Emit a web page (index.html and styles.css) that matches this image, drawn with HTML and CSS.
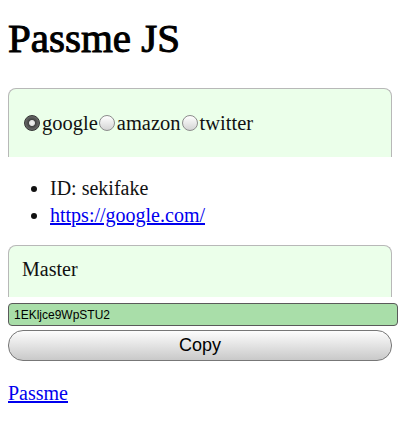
FILE: index.html
```html
<!DOCTYPE html>
<html>
<head>
<meta charset="utf-8">
<link rel="stylesheet" href="styles.css">
</head>
<body>
<div class="page">
  <h1 class="title">Passme JS</h1>
  <div class="panel panel-sites">
    <label class="choice"><input type="radio" name="site" class="radio" checked>google</label><label class="choice"><input type="radio" name="site" class="radio">amazon</label><label class="choice"><input type="radio" name="site" class="radio">twitter</label>
  </div>
  <ul class="info">
    <li>ID: sekifake</li>
    <li><a href="#" class="link">https://google.com/</a></li>
  </ul>
  <div class="panel panel-master">Master</div>
  <input class="result" type="text" value="1EKljce9WpSTU2">
  <button class="copy">Copy</button>
  <p class="footer"><a href="#" class="link">Passme</a></p>
</div>
</body>
</html>
```

FILE: styles.css
```css
html, body {
  margin: 0;
  padding: 0;
  background: #fff;
}
.page {
  padding: 0 8px;
  font-family: "Liberation Serif", serif;
  font-size: 20px;
  color: #111;
}
.title {
  margin: 15px 0 26px;
  font-size: 41px;
  font-weight: normal;
  line-height: 47px;
  color: #000;
  -webkit-text-stroke: 1px #000;
}
.panel {
  background: #ebffea;
  border: 1px solid #b8b8b8;
  border-bottom: none;
  border-radius: 8px 8px 0 0;
  line-height: 23px;
}
.panel-sites {
  box-sizing: border-box;
  height: 69px;
  padding: 0 14px;
  display: flex;
  align-items: center;
  font-size: 20.5px;
}
.choice {
  display: inline-flex;
  align-items: center;
}
.radio {
  appearance: none;
  -webkit-appearance: none;
  width: 16px;
  height: 16px;
  margin: 0 2px 0 1px;
  border-radius: 50%;
  border: 1px solid #8c8c8c;
  box-sizing: border-box;
  background: linear-gradient(#ffffff, #d4d4d4);
}
.radio:checked {
  border-color: #333;
  background: radial-gradient(circle at 50% 50%, #f2f2f2 0, #e0e0e0 2.5px, #444 3.5px, #6a6a6a 7px);
}
.info {
  margin: 18px 0 16px;
  padding-left: 42px;
  line-height: 27px;
}
.link {
  color: #0000ee;
}
.panel-master {
  height: 52px;
  box-sizing: border-box;
  padding: 12px 13px 0;
}
.result {
  display: block;
  box-sizing: border-box;
  width: calc(100% + 6px);
  height: 23px;
  margin: 6px 0 0;
  padding: 0 5px;
  border: 1px solid #5a5a5a;
  border-radius: 4px;
  background: #a9dea9;
  font-family: "Liberation Sans", Arial, sans-serif;
  font-size: 12px;
  color: #000;
}
.copy {
  display: block;
  box-sizing: border-box;
  width: 100%;
  height: 31px;
  margin: 4px 0 0;
  border: 1px solid #777;
  border-radius: 15px;
  background: linear-gradient(#fdfdfd, #c9c9c9);
  font-family: "Liberation Sans", Arial, sans-serif;
  font-size: 18px;
  color: #000;
  padding: 0;
}
.footer {
  margin: 21px 0 0;
  line-height: 23px;
}
```
